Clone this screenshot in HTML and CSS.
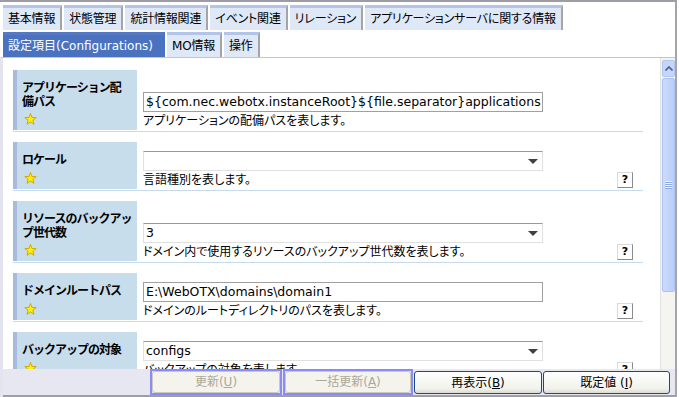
FILE: index.html
```html
<!DOCTYPE html>
<html lang="ja">
  <head>
    <meta charset="UTF-8" />
    <title>設定項目</title>
    <link rel="stylesheet" href="styles.css">
  </head>
  <body>
    <div class="frame">
      <!-- タブ -->
      <div class="tabs">
        <div class="tab-row">
          <span class="tab">基本情報</span>
          <span class="tab">状態管理</span>
          <span class="tab">統計情報関連</span>
          <span class="tab">イベント関連</span>
          <span class="tab">リレーション</span>
          <span class="tab">アプリケーションサーバに関する情報</span>
        </div>
        <div class="tab-row">
          <span class="tab active">設定項目(Configurations)</span>
          <span class="tab">MO情報</span>
          <span class="tab">操作</span>
        </div>
      </div>

      <div class="panel">
        <div class="scroll">
          <div class="items">
            <div class="item tall">
              <div class="label">
                <div class="name">アプリケーション配<br>備パス</div>
                <svg class="star" viewBox="0 0 14 13"><polygon points="7,0.5 8.59,4.82 13.18,4.99 9.57,7.83 10.82,12.26 7,9.7 3.18,12.26 4.43,7.83 0.82,4.99 5.41,4.82"/></svg>
              </div>
              <div class="field">
                <div class="input">${com.nec.webotx.instanceRoot}${file.separator}applications</div>
                <div class="desc"><span>アプリケーションの配備パスを表します。</span></div>
              </div>
            </div>

            <div class="item">
              <div class="label">
                <div class="name">ロケール</div>
                <svg class="star" viewBox="0 0 14 13"><polygon points="7,0.5 8.59,4.82 13.18,4.99 9.57,7.83 10.82,12.26 7,9.7 3.18,12.26 4.43,7.83 0.82,4.99 5.41,4.82"/></svg>
              </div>
              <div class="field">
                <div class="select"><span></span><i class="arrow"></i></div>
                <div class="desc"><span>言語種別を表します。</span><span class="help">?</span></div>
              </div>
            </div>

            <div class="item tall">
              <div class="label">
                <div class="name">リソースのバックアッ<br>プ世代数</div>
                <svg class="star" viewBox="0 0 14 13"><polygon points="7,0.5 8.59,4.82 13.18,4.99 9.57,7.83 10.82,12.26 7,9.7 3.18,12.26 4.43,7.83 0.82,4.99 5.41,4.82"/></svg>
              </div>
              <div class="field">
                <div class="select"><span>3</span><i class="arrow"></i></div>
                <div class="desc"><span>ドメイン内で使用するリソースのバックアップ世代数を表します。</span><span class="help">?</span></div>
              </div>
            </div>

            <div class="item">
              <div class="label">
                <div class="name">ドメインルートパス</div>
                <svg class="star" viewBox="0 0 14 13"><polygon points="7,0.5 8.59,4.82 13.18,4.99 9.57,7.83 10.82,12.26 7,9.7 3.18,12.26 4.43,7.83 0.82,4.99 5.41,4.82"/></svg>
              </div>
              <div class="field">
                <div class="input">E:\WebOTX\domains\domain1</div>
                <div class="desc"><span>ドメインのルートディレクトリのパスを表します。</span><span class="help">?</span></div>
              </div>
            </div>

            <div class="item">
              <div class="label">
                <div class="name">バックアップの対象</div>
                <svg class="star" viewBox="0 0 14 13"><polygon points="7,0.5 8.59,4.82 13.18,4.99 9.57,7.83 10.82,12.26 7,9.7 3.18,12.26 4.43,7.83 0.82,4.99 5.41,4.82"/></svg>
              </div>
              <div class="field">
                <div class="select"><span>configs</span><i class="arrow"></i></div>
                <div class="desc"><span>バックアップの対象を表します。</span><span class="help">?</span></div>
              </div>
            </div>
          </div>

          <!-- スクロールバー -->
          <div class="scrollbar">
            <div class="sb-up">
              <svg viewBox="0 0 8 5" width="8" height="5"><polyline points="0.5,4.5 4,1 7.5,4.5" fill="none" stroke="#4d6185" stroke-width="1.6"/></svg>
            </div>
            <div class="sb-thumb"><span class="grip"></span></div>
          </div>
        </div>

        <div class="buttons">
          <span class="focus"><button class="btn" disabled>更新(<u>U</u>)</button></span>
          <span class="focus"><button class="btn" disabled>一括更新(<u>A</u>)</button></span>
          <button class="btn">再表示(<u>B</u>)</button>
          <button class="btn">既定値 (<u>I</u>)</button>
        </div>
      </div>
    </div>
  </body>
</html>
```

FILE: styles.css
```css
/* 全体 */
* {
  box-sizing: border-box;
  margin: 0;
  padding: 0;
}
body {
  font-family: "DejaVu Sans", "Noto Sans CJK JP", sans-serif;
  font-size: 12px;
  font-feature-settings: "palt";
  color: #000;
  background: #fff;
  width: 679px;
  height: 397px;
  overflow: hidden;
}
.frame {
  width: 677px;
  height: 397px;
  border-top: 2px solid #9d9da5;
  border-right: 2px solid #a4a4ac;
  display: flex;
  flex-direction: column;
}

/* タブ */
.tabs {
  padding: 3px 0 0 3px;
}
.tab-row {
  display: flex;
  gap: 2px;
  height: 25px;
}
.tab-row + .tab-row {
  margin-top: 2px;
}
.tab {
  background: #dfe8f7;
  border-top: 3px solid #b3c5e6;
  border-right: 2px solid #a5a5a5;
  padding: 0 5px;
  letter-spacing: -0.2px;
  line-height: 22px;
  white-space: nowrap;
}
.tab.active {
  background: #4a72bf;
  border-top-color: #5479c2;
  border-right-color: #4a72bf;
  color: #fff;
  letter-spacing: 0;
  padding-right: 10px;
}

/* パネル */
.panel {
  flex: 1;
  min-height: 0;
  border-top: 1px solid #c4c4cc;
  border-left: 3px solid #e4e4f0;
  display: flex;
  flex-direction: column;
}
.scroll {
  flex: 1;
  min-height: 0;
  display: flex;
  overflow: hidden;
}
.items {
  width: 657px;
  padding: 12px 0 0 10px;
}
.item {
  display: flex;
  width: 630px;
  padding-bottom: 1px;
  border-bottom: 1px solid #c5dbeb;
  margin-bottom: 10px;
}
.label {
  width: 124px;
  min-height: 47px;
  flex-shrink: 0;
  background: #c8ddec;
  border-left: 4px solid #a9badd;
  padding: 10px 2px 5px 5px;
  display: flex;
  flex-direction: column;
}
.item.tall .label {
  min-height: 60px;
}
.name {
  font-family: "Noto Sans CJK JP", sans-serif;
  font-weight: bold;
  font-feature-settings: normal;
  letter-spacing: -1px;
  line-height: 14px;
  white-space: nowrap;
}
.star {
  margin-top: auto;
  margin-left: 2px;
  width: 13px;
  height: 12px;
  fill: #fff200;
  stroke: #d2a200;
  stroke-width: 1;
}
.field {
  flex: 1;
  margin-left: 6px;
  display: flex;
  flex-direction: column;
  justify-content: flex-end;
}
.input,
.select {
  width: 400px;
  height: 20px;
  font-size: 12.5px;
  line-height: 18px;
  padding: 0 2px;
  white-space: nowrap;
  overflow: hidden;
}
.input {
  border: 1px solid #a0a0a0;
}
.select {
  border: 1px solid #e0e0e0;
  border-top-color: #999;
  display: flex;
  justify-content: space-between;
  align-items: center;
  padding-right: 4px;
}
.arrow {
  width: 0;
  height: 0;
  border-left: 5px solid transparent;
  border-right: 5px solid transparent;
  border-top: 5px solid #404040;
}
.desc {
  height: 18px;
  display: flex;
  justify-content: space-between;
  align-items: flex-end;
  padding-right: 10px;
  line-height: 17px;
  white-space: nowrap;
}
.help {
  width: 16px;
  height: 16px;
  margin-bottom: 1px;
  border: 1px solid #8a8a8a;
  border-top-color: #dadada;
  border-left-color: #dadada;
  background: #fff;
  font-weight: bold;
  font-size: 11px;
  line-height: 14px;
  text-align: center;
}

/* スクロールバー */
.scrollbar {
  width: 15px;
  flex-shrink: 0;
  background: #f4f4f0;
  border-left: 1px solid #e2e2e2;
  padding: 2px 0 0 1px;
  display: flex;
  flex-direction: column;
}
.sb-up {
  height: 17px;
  background: #c6d5fc;
  border: 1px solid #b2c6f2;
  border-radius: 2px;
  display: flex;
  justify-content: center;
  align-items: center;
}
.sb-thumb {
  height: 214px;
  margin-top: 1px;
  background: linear-gradient(to right, #cddcfd, #bacdf8);
  border: 1px solid #aec2f0;
  border-radius: 2px;
  display: flex;
  justify-content: center;
  align-items: center;
}
.grip {
  width: 7px;
  height: 8px;
  background: repeating-linear-gradient(#eef3ff 0 1px, #8fa8e6 1px 2px);
}

/* ボタン */
.buttons {
  height: 28px;
  background: #e7e7f1;
  border-bottom: 2px solid #9e9ea6;
  display: flex;
  gap: 1px;
  padding-left: 147px;
}
.focus {
  width: 132px;
  height: 26px;
  border: 2px solid #8b8bf3;
  display: flex;
}
.focus + .focus {
  width: 130px;
}
.btn {
  font: inherit;
  width: 128px;
  height: 23px;
  margin-top: 2px;
  border: 1px solid #1f4a80;
  border-radius: 3px;
  background: linear-gradient(#fefefe, #f2f2ec 80%, #dcdad0);
  color: #000;
  line-height: 20px;
}
.btn:last-child {
  width: 127px;
}
.focus .btn {
  margin: 0;
  width: 100%;
  height: 22px;
  border-color: #cbc9bd;
  background: #f4f3ec;
  color: #aca899;
}
```
